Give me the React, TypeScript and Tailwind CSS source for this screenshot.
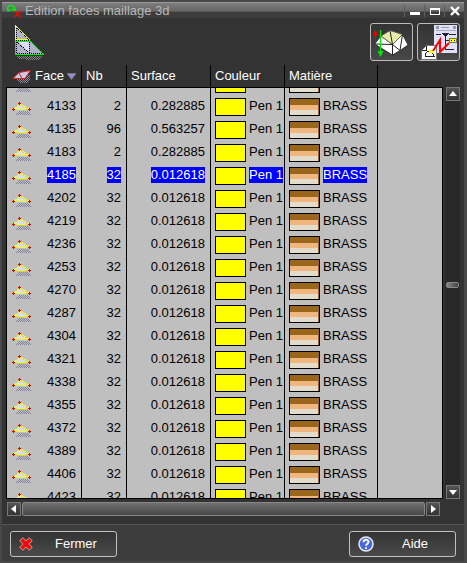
import { useId, useLayoutEffect, useRef, useState } from 'react';

interface FaceRow {
  id: number;
  count: number;
  surface: string;
}

const SMALL_SURFACE = '0.012618';

const ROWS: FaceRow[] = [
  { id: 4131, count: 96, surface: '0.563257' },
  { id: 4133, count: 2, surface: '0.282885' },
  { id: 4135, count: 96, surface: '0.563257' },
  { id: 4183, count: 2, surface: '0.282885' },
  ...[4185, 4202, 4219, 4236, 4253, 4270, 4287, 4304, 4321, 4338, 4355, 4372, 4389, 4406, 4423].map((id) => ({
    id,
    count: 32,
    surface: SMALL_SURFACE,
  })),
];

const INITIAL_SCROLL = 16;

function Dither({ id, color }: { id: string; color: string }) {
  return (
    <pattern id={id} width="2" height="2" patternUnits="userSpaceOnUse">
      <rect width="1" height="1" fill={color} />
      <rect x="1" y="1" width="1" height="1" fill={color} />
    </pattern>
  );
}

function FaceIcon() {
  const shadow = useId();
  return (
    <svg width="20" height="14" viewBox="0 0 20 14" shapeRendering="crispEdges" className="mt-1 block">
      <defs>
        <Dither id={shadow} color="#8584a0" />
      </defs>
      <path d="M6 9h10l3 3v1H4v-2z" fill={`url(#${shadow})`} />
      <path d="M7 2L2 8h15z" fill="#dcdcf4" />
      <path d="M7 2h1v1H7zM6 3h1v1H6zM5 4h1v1H5zM3 5h2v1H3zM2 6h1v1H2zM8 2h2v1H8zM10 3h2v1h-2zM12 4h2v1h-2zM14 5h1v1h-1zM15 6h2v1h-2zM2 7h14v1H2z" fill="#ffff00" />
      <path d="M6 1h3v1H6zM7 0h1v3H7zM0 7h3v1H0zM1 6h1v3H1zM16 7h3v1h-3zM17 6h1v3h-1z" fill="#e60000" />
    </svg>
  );
}

function HeaderFaceIcon() {
  const shadow = useId();
  return (
    <svg width="20" height="13" viewBox="0 0 20 13" className="block">
      <defs>
        <Dither id={shadow} color="#8a8a9c" />
      </defs>
      <path d="M5 9L18 4v6l-3 3H8z" fill={`url(#${shadow})`} shapeRendering="crispEdges" />
      <path d="M1 8.500L7 2.500L18.500 .5L13 8.500z" fill="#c9c9ea" stroke="#e81818" />
      <path d="M7 3L10 8.500" stroke="#e81818" />
    </svg>
  );
}

function TriangleIcon() {
  const shadow = useId();
  return (
    <svg width="32" height="38" viewBox="0 0 32 38" shapeRendering="crispEdges" className="block">
      <defs>
        <Dither id={shadow} color="#85858f" />
      </defs>
      <path d="M4 31h26v2l-4 2h-9l-6-1H6z" fill={`url(#${shadow})`} />
      <path d="M3 1L32 30H3z" fill="#b1b1cb" />
      <path d="M5 16h12v12z" fill="#dcdcf8" />
      <path d="M4.500 3v25.500h25M17.500 17v12M5 17L17 28M4 15.500h13M5 3l26 26" stroke="#000" strokeDasharray="1 1" fill="none" />
      <path d="M3.500 0v15M3.500 0.500L18 15M3 14.500h13" stroke="#ffff00" fill="none" />
      <path d="M3.500 16v13.500h28L18 16M4 16.500h14" stroke="#00ff00" fill="none" />
    </svg>
  );
}

function AppIcon() {
  return (
    <svg width="17" height="14" viewBox="0 0 17 14" className="block">
      <path d="M2.500 6.500C.5 4 2 1.500 5 1.500s4 2 3.500 4.500M6 4.500l2.500 2.500L10 5M1 6.500h4" stroke="#00ed12" strokeWidth="1.500" fill="none" />
      <path d="M8.500 7l6.500 6M15 7l-6.500 6" stroke="#f00" strokeWidth="1.200" />
    </svg>
  );
}

function MeshIcon() {
  return (
    <svg width="37" height="30" viewBox="0 0 37 30" className="block">
      <path d="M8 9L1.500 17L19.500 28L27 23.500L35 18L29.500 7.500L19.500 17.500z" fill="#fff" stroke="#222" strokeWidth=".8" />
      <path d="M17 3.500L29.500 7.500L19.500 17.500L8 9z" fill="#e9eea7" stroke="#555" strokeWidth=".8" />
      <path d="M17 3.500l2.500 14V28M1.500 17l18 .5L27 23.500l2.500-16" fill="none" stroke="#222" />
      <path d="M2.500 7v22" stroke="#e80000" />
      <path d="M2.500 2L0 9h5z" fill="#e80000" />
      <path d="M7.500 3v22" stroke="#00e600" strokeWidth="1.300" />
      <path d="M4.500 24h6l-3 6z" fill="#00e600" />
    </svg>
  );
}

function LinkIcon() {
  return (
    <svg width="37" height="36" viewBox="0 0 37 36" shapeRendering="crispEdges" className="block">
      <path d="M14 1h23v28H14z" fill="#e0e0f8" />
      <path d="M16 2h3v3h-3zM21 3h8v1h-8zM33 2h3v3h-3z" fill="#99a" />
      <path d="M16 10.500h5M29 10.500h7M25.500 13v13M26 16.500h4M26 25.500h8" stroke="#223" fill="none" />
      <path d="M16 6.500h20" stroke="#aab" fill="none" />
      <path d="M22 9h7l-3 4h-1z" fill="#223" />
      <path d="M29.500 14.500h7v4h-7z" fill="#ffff00" stroke="#776" />
      <path d="M31 16h1v1h-1zM34 16h1v1h-1z" fill="#000" />
      <path d="M1.500 35V26.500l5-5h10V35z" fill="#fff" stroke="#777" />
      <path d="M1.500 26.500h5v-5M5 32.500v-3l3-2h4l2 5z" stroke="#222" fill="none" />
      <path d="M9 26h4v3H9z" fill="#ffff00" />
      <path d="M13 27l7-11v12l9-9" stroke="#f00" strokeWidth="2" fill="none" shapeRendering="auto" />
    </svg>
  );
}

function CrossIcon() {
  return (
    <svg width="14" height="14" viewBox="0 0 14 14" className="block">
      <path d="M2 2l10 10M12 2L2 12" stroke="#c9a5a5" strokeWidth="5" />
      <path d="M2.500 2.500l9 9M11.500 2.500l-9 9" stroke="#f00808" strokeWidth="3.500" />
    </svg>
  );
}

function HelpIcon() {
  return (
    <svg width="16" height="16" viewBox="0 0 16 16" className="block">
      <circle cx="8" cy="8" r="7" fill="#4668d8" stroke="#e8ecfa" strokeWidth="1.500" />
      <path d="M5.500 6.200C5.500 3 10.500 3 10.500 6c0 1.800-2.400 1.700-2.400 3.800M8 11.200v1.800" stroke="#fff" strokeWidth="1.900" fill="none" />
    </svg>
  );
}

function ArrowButton({ label, d }: { label: string; d: string }) {
  return (
    <button
      type="button"
      aria-label={label}
      className="flex size-[14px] shrink-0 items-center justify-center border border-[#777] bg-linear-to-b from-[#555] to-[#333]"
    >
      <svg width="10" height="10" viewBox="0 0 10 10">
        <path d={d} fill="#fff" />
      </svg>
    </button>
  );
}

function TitleBar() {
  return (
    <header className="flex h-4 shrink-0 items-center border-t border-[#999] bg-linear-to-b from-[#7d7d7d] from-0% via-[#666] via-55% to-[#3c3c3c] to-60% pl-1">
      <AppIcon />
      <h1 className="ml-[2px] text-[13px] leading-4 text-[#b8b8b8]">Edition faces maillage 3d</h1>
      <div className="ml-auto flex items-center">
        <button type="button" aria-label="Réduire" className="flex h-3 w-5 items-center justify-center border-l border-[#5c5c5c]">
          <svg width="10" height="10" viewBox="0 0 10 10"><path d="M0 6h10v3H0z" fill="#fff" /></svg>
        </button>
        <button type="button" aria-label="Agrandir" className="flex h-3 w-5 items-center justify-center border-l border-[#5c5c5c]">
          <svg width="10" height="10" viewBox="0 0 10 10" shapeRendering="crispEdges"><path d="M0 2h10v7H0zM1 4v4h8V4z" fill="#fff" fillRule="evenodd" /></svg>
        </button>
        <button type="button" aria-label="Fermer la fenêtre" className="flex h-3 w-5 items-center justify-center border-l border-[#5c5c5c]">
          <svg width="10" height="10" viewBox="0 0 10 10"><path d="M1 1l8 8M9 1L1 9" stroke="#fff" strokeWidth="2.400" /></svg>
        </button>
      </div>
    </header>
  );
}

function FaceTable() {
  const [selected, setSelected] = useState(4185);
  const scroller = useRef<HTMLDivElement>(null);

  useLayoutEffect(() => {
    if (scroller.current) scroller.current.scrollTop = INITIAL_SCROLL;
  }, []);

  return (
    <div ref={scroller} className="min-h-0 flex-1 overflow-hidden border-b border-black">
      <table className="w-full table-fixed border-separate border-spacing-0 text-[13px] leading-4">
        <colgroup>
          <col className="w-[76px]" />
          <col className="w-[45px]" />
          <col className="w-[84px]" />
          <col className="w-[74px]" />
          <col className="w-[93px]" />
          <col />
        </colgroup>
        <thead className="sticky top-0 z-10 bg-[#333] text-left text-white">
          <tr className="h-[23px]">
            <th className="border-r border-b border-black p-0 pl-[6px] font-normal">
              <div className="flex items-center gap-[3px]">
                <HeaderFaceIcon />
                Face
                <svg width="9" height="7" viewBox="0 0 9 7"><path d="M0 .5h9L4.500 6.500z" fill="#9090d8" stroke="#77777f" /></svg>
              </div>
            </th>
            <th className="border-r border-b border-black p-0 pl-1 font-normal">Nb</th>
            <th className="border-r border-b border-black p-0 pl-1 font-normal">Surface</th>
            <th className="border-r border-b border-black p-0 pl-1 font-normal">Couleur</th>
            <th className="border-r border-b border-black p-0 pl-1 font-normal">Matière</th>
            <th className="border-b border-black p-0" />
          </tr>
        </thead>
        <tbody className="bg-[#bfbfbf] text-black">
          {ROWS.map((row) => {
            const mark = row.id === selected ? 'block bg-[#0000ff] text-white' : 'block';
            return (
              <tr key={row.id} onClick={() => setSelected(row.id)} className="h-[23px] align-top">
                <td className="border-x border-black p-0 pt-[3px] pr-[5px] pl-[5px]">
                  <div className="flex items-start justify-between">
                    <FaceIcon />
                    <span className={mark}>{row.id}</span>
                  </div>
                </td>
                <td className="border-r border-black p-0 pt-[3px] pr-[5px]">
                  <div className="flex justify-end"><span className={mark}>{row.count}</span></div>
                </td>
                <td className="border-r border-black p-0 pt-[3px] pr-[5px]">
                  <div className="flex justify-end"><span className={mark}>{row.surface}</span></div>
                </td>
                <td className="border-r border-black p-0 pt-[3px] pl-1">
                  <div className="flex items-start gap-[3px] whitespace-nowrap">
                    <span className="h-[18px] w-[31px] shrink-0 border border-black bg-[#ffff00]" />
                    <span className={mark}>Pen 1</span>
                  </div>
                </td>
                <td className="border-r border-black p-0 pt-[3px] pl-1">
                  <div className="flex items-start gap-[3px]">
                    <span className="flex h-[18px] w-[31px] shrink-0 flex-col border border-black bg-[#99661c] pr-px">
                      <span className="mt-[6px] h-[5px] bg-[#f0b680]" />
                      <span className="h-[5px] bg-[#e3dccb]" />
                    </span>
                    <span className={mark}>BRASS</span>
                  </div>
                </td>
                <td className="border-r border-black p-0" />
              </tr>
            );
          })}
        </tbody>
      </table>
    </div>
  );
}

export default function App() {
  return (
    <div className="flex h-screen flex-col border-2 border-r-3 border-[#484848] bg-[#333] font-['Liberation_Sans',Arial,sans-serif]">
      <TitleBar />
      <div className="flex shrink-0 justify-between pr-1 pl-[10px]">
        <div className="pt-[7px]">
          <TriangleIcon />
        </div>
        <div className="flex gap-1 pt-[5px]">
          <button type="button" aria-label="Inverser les faces" className="flex h-[38px] w-[43px] items-center justify-center rounded-[3px] border border-[#bbb] bg-linear-to-b from-[#333] to-[#484848]">
            <MeshIcon />
          </button>
          <button type="button" aria-label="Lier les propriétés" className="flex h-[38px] w-[43px] items-center justify-center rounded-[3px] border border-[#bbb] bg-linear-to-b from-[#333] to-[#484848]">
            <LinkIcon />
          </button>
        </div>
      </div>
      <main className="mt-[2px] flex min-h-0 flex-1 gap-[2px] pr-1 pl-1">
        <FaceTable />
        <div className="mt-[22px] flex w-[15px] flex-col items-center bg-[#292929]">
          <ArrowButton label="Défiler vers le haut" d="M5 2l4 5H1z" />
          {/* thumb sits at the midpoint of the list */}
          <div className="flex flex-1 items-center pb-4">
            <div className="h-[6px] w-[13px] rounded-xs border border-[#888] bg-linear-to-r from-[#888] to-[#444]" />
          </div>
          <ArrowButton label="Défiler vers le bas" d="M5 8L1 3h8z" />
        </div>
      </main>
      <div className="mt-[3px] mr-[24px] ml-[5px] flex shrink-0 gap-px">
        <ArrowButton label="Défiler vers la gauche" d="M2 5l5-4v8z" />
        <div className="h-[14px] flex-1 rounded-xs border border-[#888] bg-linear-to-b from-[#707070] to-[#484848]" />
        <ArrowButton label="Défiler vers la droite" d="M8 5L3 1v8z" />
      </div>
      <footer className="mt-2 flex shrink-0 justify-between border-t border-[#555] bg-[#3d3d3d] px-2 pt-[6px] pb-1 text-[13px] text-white">
        <button type="button" className="flex h-[26px] w-[107px] items-center gap-[22px] rounded-[3px] border border-[#c0c0c0] bg-linear-to-b from-[#333] to-[#4a4a4a] pl-2">
          <CrossIcon />
          Fermer
        </button>
        <button type="button" className="flex h-[26px] w-[107px] items-center gap-7 rounded-[3px] border border-[#c0c0c0] bg-linear-to-b from-[#333] to-[#4a4a4a] pl-2">
          <HelpIcon />
          Aide
        </button>
      </footer>
    </div>
  );
}
